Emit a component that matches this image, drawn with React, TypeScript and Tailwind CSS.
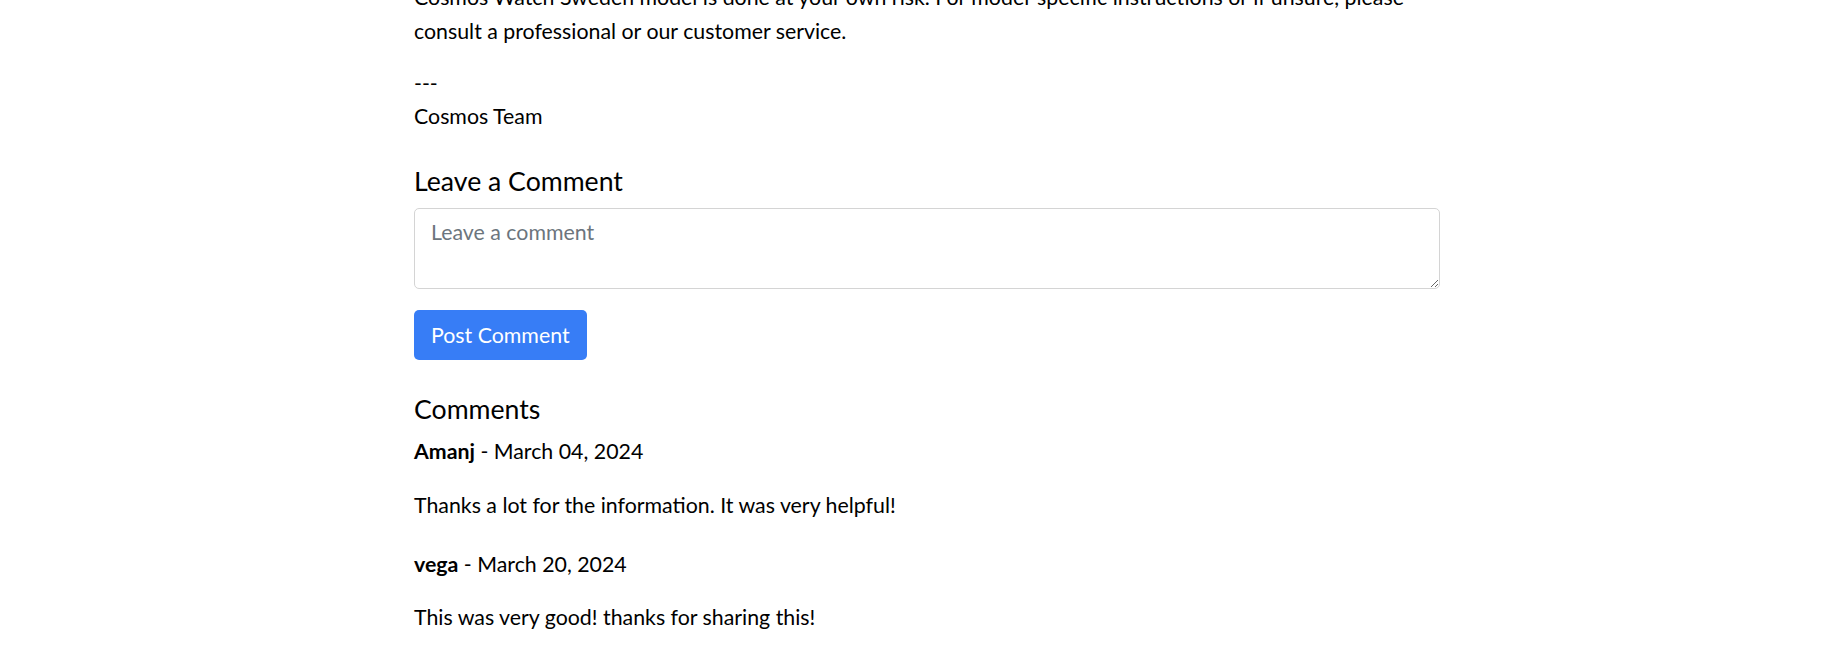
import React from "react";

export default function App() {
  const font = { fontFamily: "Lato, 'Open Sans', Arial, sans-serif" };
  return (
    <div className="min-h-[670px] w-full overflow-hidden bg-white text-black" style={font}>
      <div className="ml-[414px] w-[1026px]">
        <p className="mt-[-20px] text-[21.33px] leading-[34px]">
          Cosmos Watch Sweden model is done at your own risk. For model-specific instructions or if unsure, please consult a professional or our customer service.
        </p>
        <div className="mt-[19px] text-[21.33px] leading-[33px]">
          <div>---</div>
          <div>Cosmos Team</div>
        </div>
        <h5 className="mt-[34px] text-[26.67px] leading-[29px]">Leave a Comment</h5>
        <textarea
          placeholder="Leave a comment"
          className="mt-[12px] block h-[81px] w-full rounded-[5px] border border-[#d4d4d4] px-[16px] py-[8px] text-[21.33px] leading-[31px] outline-none placeholder:text-[#6c757d]"
        />
        <button className="mt-[21px] h-[50px] rounded-[5px] bg-[#377df6] px-[17px] text-[21.33px] leading-[30px] text-white">
          Post Comment
        </button>
        <h5 className="mt-[35px] text-[26.67px] leading-[29px]">Comments</h5>
        <div className="mt-[11px] text-[21.33px] leading-[32px]">
          <div>
            <b className="font-bold">Amanj</b> - March 04, 2024
          </div>
          <p className="mt-[22px]">Thanks a lot for the information. It was very helpful!</p>
        </div>
        <div className="mt-[27px] text-[21.33px] leading-[32px]">
          <div>
            <b className="font-bold">vega</b> - March 20, 2024
          </div>
          <p className="mt-[21px]">This was very good! thanks for sharing this!</p>
        </div>
      </div>
    </div>
  );
}
